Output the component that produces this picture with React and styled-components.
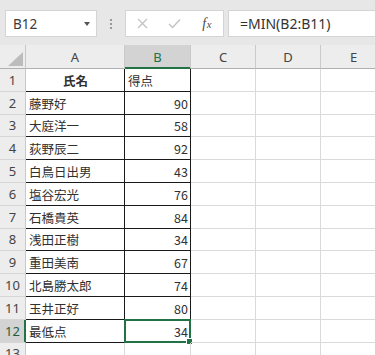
import styled, { createGlobalStyle } from 'styled-components'

const GlobalStyle = createGlobalStyle`
  html, body {
    margin: 0;
    padding: 0;
    background: #ffffff;
  }
  body {
    width: 375px;
    height: 355px;
    overflow: hidden;
    font-family: "Noto Sans", "Noto Sans CJK JP", sans-serif;
  }
`;

const GREEN = '#217346';

const rows = [
  ['氏名', '得点'],
  ['藤野好', 90],
  ['大庭洋一', 58],
  ['荻野辰二', 92],
  ['白鳥日出男', 43],
  ['塩谷宏光', 76],
  ['石橋貴英', 84],
  ['浅田正樹', 34],
  ['重田美南', 67],
  ['北島勝太郎', 74],
  ['玉井正好', 80],
  ['最低点', 34],
];

const Page = styled.div`
  width: 375px;
  height: 355px;
  overflow: hidden;
`;

const Toolbar = styled.div`
  display: flex;
  align-items: stretch;
  height: 27px;
  padding: 10px 0 8px 5px;
  background: #e7e7e7;
  border-top: 1px solid #dedede;
  box-sizing: content-box;
  margin-top: -1px;
`;

const NameBox = styled.div`
  width: 92px;
  box-sizing: border-box;
  display: flex;
  align-items: center;
  justify-content: space-between;
  padding: 0 6px 0 7px;
  background: #ffffff;
  border: 1px solid #d4d4d4;
  font-size: 13.5px;
  color: #3a3a3a;
`;

const Caret = styled.span`
  width: 0;
  height: 0;
  border-left: 3.5px solid transparent;
  border-right: 3.5px solid transparent;
  border-top: 4px solid #555;
`;

const Grip = styled.div`
  width: 28px;
  display: flex;
  flex-direction: column;
  align-items: center;
  justify-content: center;
  gap: 2px;

  span {
    width: 2px;
    height: 2px;
    background: #9a9a9a;
  }
`;

const FuncBox = styled.div`
  width: 99px;
  box-sizing: border-box;
  display: flex;
  align-items: center;
  background: #ffffff;
  border: 1px solid #d4d4d4;
  margin-right: 4px;
`;

const FuncButton = styled.div`
  flex: 1;
  display: flex;
  align-items: center;
  justify-content: center;
  color: ${(p) => (p.$off ? '#c2c2c2' : '#4a4a4a')};
`;

const Fx = styled.span`
  font-family: "Liberation Serif", serif;
  font-style: italic;
  font-size: 14px;
  color: #4a4a4a;

  small {
    font-size: 10.5px;
    margin-left: 0.5px;
  }
`;

const Formula = styled.div`
  flex: 1;
  display: flex;
  align-items: center;
  padding-left: 11px;
  background: #ffffff;
  border: 1px solid #d4d4d4;
  border-right: none;
  font-size: 14px;
  color: #333333;
`;

const Sheet = styled.div`
  display: grid;
  grid-template-columns: 26px 99px 66px 65px 65px 66px;
  grid-template-rows: 24px repeat(13, 22.8px);
`;

const Corner = styled.div`
  background: #ededed;
  border-right: 1px solid #c8c8c8;
  border-bottom: 1px solid #b0b0b0;
  position: relative;

  &::after {
    content: '';
    position: absolute;
    right: 2px;
    bottom: 2px;
    width: 0;
    height: 0;
    border-left: 15px solid transparent;
    border-bottom: 14px solid #bcbcbc;
  }
`;

const ColHead = styled.div`
  display: flex;
  align-items: center;
  justify-content: center;
  font-size: 13px;
  color: ${(p) => (p.$sel ? GREEN : '#444444')};
  background: ${(p) => (p.$sel ? '#d3d3d3' : '#ededed')};
  border-right: 1px solid #cacaca;
  border-bottom: 1px solid ${(p) => (p.$sel ? GREEN : '#b0b0b0')};
  box-shadow: ${(p) => (p.$sel ? `inset 0 -1px 0 ${GREEN}` : 'none')};
`;

const RowHead = styled.div`
  display: flex;
  align-items: center;
  justify-content: center;
  font-size: 13px;
  color: ${(p) => (p.$sel ? '#1f5c3b' : '#444444')};
  background: ${(p) => (p.$sel ? '#d3d3d3' : '#ededed')};
  border-right: 1px solid ${(p) => (p.$sel ? GREEN : '#c8c8c8')};
  border-bottom: 1px solid #d6d6d6;
  box-shadow: ${(p) => (p.$sel ? `inset -1px 0 0 ${GREEN}` : 'none')};
`;

const Cell = styled.div`
  position: relative;
  display: flex;
  align-items: center;
  justify-content: ${(p) => p.$align || 'flex-start'};
  padding: 1px 2px 0 3px;
  font-family: "Noto Sans CJK JP", sans-serif;
  font-size: 12.5px;
  font-weight: ${(p) => (p.$bold ? 700 : 400)};
  color: #303030;
  white-space: nowrap;
  border-right: 1px solid ${(p) => (p.$boxed ? '#1a1a1a' : '#dadada')};
  border-bottom: 1px solid ${(p) => (p.$boxed ? '#1a1a1a' : '#dadada')};
`;

const Selection = styled.span`
  position: absolute;
  left: -1px;
  top: -1px;
  right: -1px;
  bottom: -1px;
  border: 2px solid ${GREEN};
  pointer-events: none;

  &::after {
    content: '';
    position: absolute;
    right: -4px;
    bottom: -4px;
    width: 5px;
    height: 5px;
    background: ${GREEN};
    border: 1px solid #ffffff;
  }
`;

const XIcon = () => (
  <svg width="11" height="11" viewBox="0 0 11 11">
    <path d="M1 1 L10 10 M10 1 L1 10" stroke="currentColor" strokeWidth="1.3" fill="none" />
  </svg>
);

const CheckIcon = () => (
  <svg width="13" height="11" viewBox="0 0 13 11">
    <path d="M1 6 L4.5 9.5 L12 1.5" stroke="currentColor" strokeWidth="1.3" fill="none" />
  </svg>
);

const cols = ['A', 'B', 'C', 'D', 'E'];

const App = () => {
  return (
    <Page>
      <GlobalStyle />
      <Toolbar>
        <NameBox>
          B12
          <Caret />
        </NameBox>
        <Grip>
          <span />
          <span />
          <span />
        </Grip>
        <FuncBox>
          <FuncButton $off>
            <XIcon />
          </FuncButton>
          <FuncButton $off>
            <CheckIcon />
          </FuncButton>
          <FuncButton>
            <Fx>
              f<small>x</small>
            </Fx>
          </FuncButton>
        </FuncBox>
        <Formula>=MIN(B2:B11)</Formula>
      </Toolbar>
      <Sheet>
        <Corner />
        {cols.map((c) => (
          <ColHead key={c} $sel={c === 'B'}>
            {c}
          </ColHead>
        ))}
        {rows.map(([name, score], i) => {
          const r = i + 1;
          return [
            <RowHead key={`h${r}`} $sel={r === 12}>
              {r}
            </RowHead>,
            <Cell key={`a${r}`} $boxed $bold={r === 1} $align={r === 1 ? 'center' : 'flex-start'}>
              {name}
            </Cell>,
            <Cell key={`b${r}`} $boxed $align={r === 1 ? 'flex-start' : 'flex-end'}>
              {score}
              {r === 12 && <Selection />}
            </Cell>,
            <Cell key={`c${r}`} />,
            <Cell key={`d${r}`} />,
            <Cell key={`e${r}`} />,
          ];
        })}
        <RowHead>13</RowHead>
        <Cell />
        <Cell />
        <Cell />
        <Cell />
        <Cell />
      </Sheet>
    </Page>
  )
}

export default App
